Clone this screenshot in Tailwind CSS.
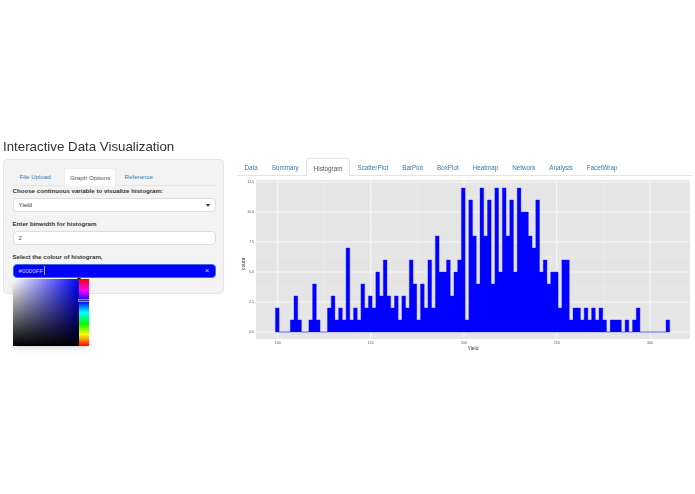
<!DOCTYPE html>
<html>

<head>
    <title>Interactive Data Visualization</title>
    <meta charset="utf-8">
    <script src="https://cdn.jsdelivr.net/npm/@tailwindcss/browser@4"></script>
</head>

<body class="w-[695px] h-[494px] bg-white overflow-hidden font-['Liberation_Sans',Arial,sans-serif] text-[#333333]">
    <div class="blur-[0.5px] w-full h-full pt-[139px] pl-[3px]">
        <h1 class="text-[13.3px] leading-[16px] h-[20px] whitespace-nowrap">Interactive Data Visualization</h1>
        <div class="flex items-start">
            <!-- Sidebar -->
            <div class="relative w-[221px] h-[135px] bg-[#f3f3f3] border border-[#e6e6e6] rounded-sm px-[8.5px] pt-[8px]">
                <div class="flex h-[18px] border-b border-[#e4e4e4] text-[6.2px] text-[#337ab7] leading-[17px] pl-[4px] whitespace-nowrap">
                    <span class="w-[47px] pl-[3px]">File Upload</span>
                    <span class="w-[52px] pl-[5.5px] h-[18px] bg-white text-[#555555] border border-b-0 border-[#eeeeee] rounded-t-sm">Graph Options</span>
                    <span class="pl-[9px]">Reference</span>
                </div>
                <p class="text-[6.15px] font-bold leading-[8px] mt-[0.5px] whitespace-nowrap">Choose continuous variable to visualize histogram:</p>
                <div class="flex items-center justify-between h-[14px] w-[203px] mt-[3.5px] bg-white border border-[#dddddd] rounded-sm px-[5px] text-[6.2px]">
                    <span>Yield</span>
                    <span class="w-0 h-0 border-x-[2.5px] border-t-[3px] border-x-transparent border-t-[#333333]"></span>
                </div>
                <p class="text-[6.15px] font-bold leading-[8px] mt-[8px] whitespace-nowrap">Enter binwidth for histogram</p>
                <div class="flex items-center h-[14px] w-[203px] mt-[3px] bg-white border border-[#dddddd] rounded-sm px-[5px] text-[6.2px] text-[#555555]">2</div>
                <p class="text-[6.15px] font-bold leading-[8px] mt-[7.5px] whitespace-nowrap">Select the colour of histogram,</p>
                <div class="flex items-center justify-between h-[14px] w-[203px] mt-[3px] bg-[#0000ff] border border-[#3b6fe0] rounded-sm px-[5px] text-[6.2px] text-[#c9c9ff]">
                    <span class="border-r border-white/70 pr-px">#0000FF</span>
                    <span class="text-[8px] leading-none text-[#d8d8ff]">×</span>
                </div>
                <!-- Colour picker popup -->
                <div class="absolute left-[9px] top-[119px] flex w-[76px] h-[67px] shadow-md">
                    <div class="relative w-[66px] h-[67px] bg-[linear-gradient(to_bottom,transparent,#000000),linear-gradient(to_right,#ffffff,#0000ff)]">
                        <span class="absolute right-[-2px] top-[-2px] w-[4px] h-[4px] rounded-full bg-black border border-[#555555]"></span>
                    </div>
                    <div class="relative w-[9.5px] h-[67px] bg-[linear-gradient(to_bottom,#ff0000,#ff00ff_17%,#0000ff_33%,#00ffff_50%,#00ff00_67%,#ffff00_83%,#ff0000)]">
                        <span class="absolute left-0 top-[21px] w-full h-px bg-[#333366] outline outline-[#cccccc]/70"></span>
                    </div>
                </div>
            </div>
            <!-- Main panel -->
            <div class="ml-[13px] w-[455px] -mt-px">
                <div class="flex h-[18px] border-b border-[#e4e4e4] text-[6.3px] text-[#337ab7] leading-[19px] pl-[0.5px] whitespace-nowrap">
                    <span class="px-[7px]">Data</span>
                    <span class="px-[7px]">Summary</span>
                    <span class="px-[7px] h-[18px] bg-white text-[#555555] border border-b-0 border-[#e4e4e4] rounded-t-sm">Histogram</span>
                    <span class="px-[7px]">ScatterPlot</span>
                    <span class="px-[7px]">BarPlot</span>
                    <span class="px-[7px]">BoxPlot</span>
                    <span class="px-[7px]">Heatmap</span>
                    <span class="px-[7px]">Network</span>
                    <span class="px-[7px]">Analysis</span>
                    <span class="px-[7px]">FacetWrap</span>
                </div>
                <svg class="block mt-[2px]" width="455" height="176" viewBox="237 177 455 176" xmlns="http://www.w3.org/2000/svg">
                    <rect x="256" y="179" width="434" height="159" fill="#e5e5e5" />
                    <g stroke="#efefef" stroke-width="0.5">
                        <path d="M256 316H690M256 286H690M256 256H690M256 226H690M256 196H690" />
                        <path d="M324.2 179V338M417.4 179V338M510.4 179V338M603.4 179V338" />
                    </g>
                    <g stroke="#f7f7f7" stroke-width="1">
                        <path d="M256 331H690M256 301H690M256 271H690M256 241H690M256 211H690M256 181H690" />
                        <path d="M277.7 179V338M370.7 179V338M464 179V338M556.7 179V338M650 179V338" />
                    </g>
                    <path id="bars" d="" fill="#0000ff" stroke="#2222ff" stroke-width="0.4" />
                    <g fill="#555555" font-size="3.5" text-anchor="end">
                        <text x="254" y="332">0.0</text>
                        <text x="254" y="302">2.5</text>
                        <text x="254" y="272">5.0</text>
                        <text x="254" y="242">7.5</text>
                        <text x="254" y="212">10.0</text>
                        <text x="254" y="182">12.5</text>
                    </g>
                    <g fill="#555555" font-size="3.5" text-anchor="middle">
                        <text x="277.7" y="343">100</text>
                        <text x="370.7" y="343">150</text>
                        <text x="464" y="343">200</text>
                        <text x="556.7" y="343">250</text>
                        <text x="650" y="343">300</text>
                    </g>
                    <text x="473" y="349" font-size="5" text-anchor="middle" fill="#333333">Yield</text>
                    <text x="0" y="0" font-size="5" text-anchor="middle" fill="#333333" transform="translate(244.5 263) rotate(-90)">count</text>
                </svg>
            </div>
        </div>
    </div>
    <script>
        // counts per 2-unit bin, read off the plot
        var counts = [2, 0, 0, 0, 1, 3, 1, 0, 0, 1, 4, 1, 0, 0, 2, 3, 1, 2, 1, 7, 1, 2, 1, 4, 2, 3, 2, 5, 3, 6, 3, 2, 3, 1, 3, 2, 6, 4, 1, 4, 2, 6, 2, 8, 5, 5, 6, 3, 5, 6, 12, 1, 11, 8, 4, 12, 8, 11, 4, 12, 5, 12, 8, 11, 5, 12, 10, 10, 8, 7, 11, 5, 6, 4, 5, 5, 2, 6, 6, 1, 2, 2, 1, 2, 1, 2, 1, 2, 1, 0, 1, 1, 1, 0, 1, 0, 1, 2, 0, 0, 0, 0, 0, 0, 0, 1];
        var x0 = 275.4, w = 3.72, y0 = 331, unit = 12;
        var d = "M" + x0 + " " + y0;
        counts.forEach(function (c, i) {
            var x = x0 + i * w;
            var top = y0 - c * unit;
            d += "L" + x.toFixed(2) + " " + top + "L" + (x + w).toFixed(2) + " " + top;
        });
        d += "L" + (x0 + counts.length * w).toFixed(2) + " " + y0 + "Z";
        document.getElementById("bars").setAttribute("d", d);
    </script>
</body>

</html>
